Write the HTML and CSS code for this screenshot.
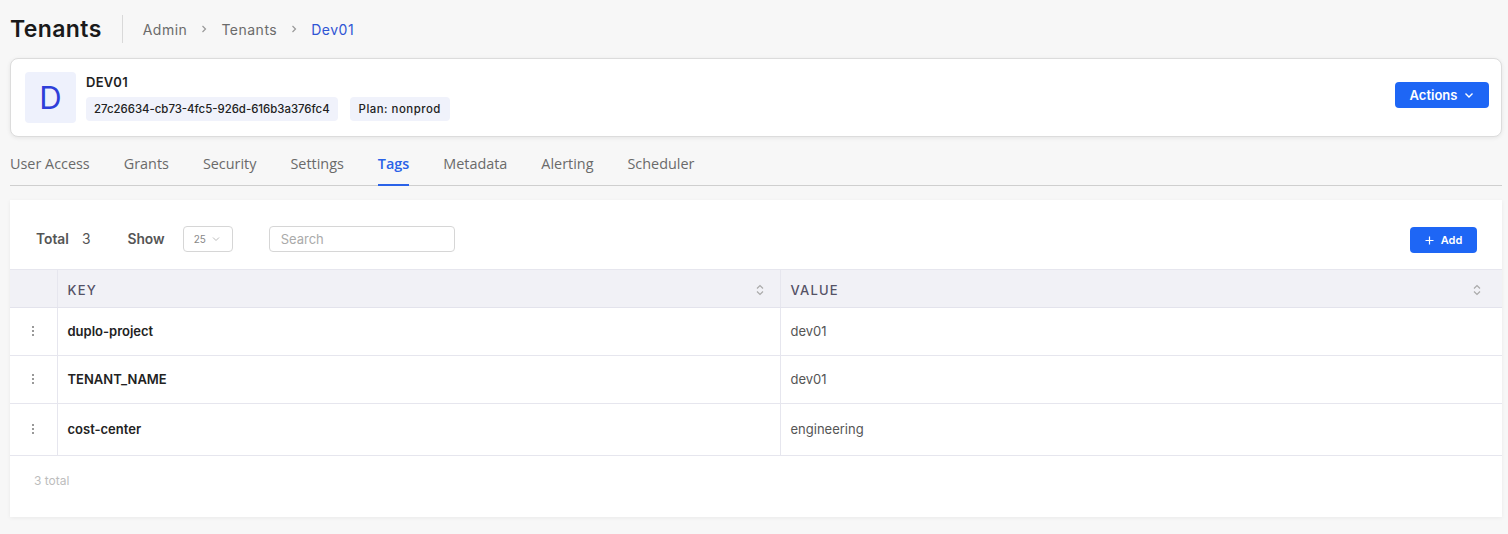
FILE: index.html
```html
<!DOCTYPE html>
<html>
<head>
<meta charset="utf-8">
<link rel="stylesheet" href="styles.css">
</head>
<body>
<div class="page">
  <header class="topbar">
    <h1 class="title">Tenants</h1>
    <nav class="crumbs">
      <span class="crumb">Admin</span>
      <svg class="sep" width="8" height="10" viewBox="0 0 8 10"><path d="M2.5 2l3 3-3 3" fill="none" stroke="#999" stroke-width="1.2"/></svg>
      <span class="crumb">Tenants</span>
      <svg class="sep" width="8" height="10" viewBox="0 0 8 10"><path d="M2.5 2l3 3-3 3" fill="none" stroke="#999" stroke-width="1.2"/></svg>
      <span class="crumb active">Dev01</span>
    </nav>
  </header>

  <section class="card">
    <div class="avatar">D</div>
    <div class="info">
      <div class="name">DEV01</div>
      <div class="chips">
        <span class="chip">27c26634-cb73-4fc5-926d-616b3a376fc4</span>
        <span class="chip plan">Plan: nonprod</span>
      </div>
    </div>
    <button class="actions">Actions
      <svg width="10" height="10" viewBox="0 0 10 10"><path d="M1.5 3.5l3.5 3.5 3.5-3.5" fill="none" stroke="#fff" stroke-width="1.4"/></svg>
    </button>
  </section>

  <nav class="tabs">
    <span class="tab">User Access</span>
    <span class="tab">Grants</span>
    <span class="tab">Security</span>
    <span class="tab">Settings</span>
    <span class="tab active">Tags</span>
    <span class="tab">Metadata</span>
    <span class="tab">Alerting</span>
    <span class="tab">Scheduler</span>
  </nav>

  <section class="panel">
    <div class="toolbar">
      <span class="lbl">Total</span><span class="num">3</span>
      <span class="lbl show">Show</span>
      <div class="select">25
        <svg width="8" height="6" viewBox="0 0 8 6"><path d="M1 1.5l3 3 3-3" fill="none" stroke="#bbb" stroke-width="1"/></svg>
      </div>
      <div class="search">Search</div>
      <button class="add">
        <svg width="9" height="9" viewBox="0 0 9 9"><path d="M4.5 0.5v8M0.5 4.5h8" stroke="#fff" stroke-width="1.2"/></svg>
        Add
      </button>
    </div>
    <table class="grid">
      <thead>
        <tr>
          <th class="c0"></th>
          <th class="c1"><div class="hd">KEY<svg width="8" height="12" viewBox="0 0 8 12"><path d="M1 4.5l3-3 3 3M1 7.5l3 3 3-3" fill="none" stroke="#aaa" stroke-width="1.2"/></svg></div></th>
          <th class="c2"><div class="hd">VALUE<svg width="8" height="12" viewBox="0 0 8 12"><path d="M1 4.5l3-3 3 3M1 7.5l3 3 3-3" fill="none" stroke="#aaa" stroke-width="1.2"/></svg></div></th>
        </tr>
      </thead>
      <tbody>
        <tr>
          <td class="c0"><span class="dots"><i></i><i></i><i></i></span></td>
          <td class="c1 key">duplo-project</td>
          <td class="c2 val">dev01</td>
        </tr>
        <tr>
          <td class="c0"><span class="dots"><i></i><i></i><i></i></span></td>
          <td class="c1 key">TENANT_NAME</td>
          <td class="c2 val">dev01</td>
        </tr>
        <tr class="last">
          <td class="c0"><span class="dots"><i></i><i></i><i></i></span></td>
          <td class="c1 key">cost-center</td>
          <td class="c2 val">engineering</td>
        </tr>
      </tbody>
    </table>
    <div class="footer">3 total</div>
  </section>
</div>
</body>
</html>
```

FILE: styles.css
```css
* { box-sizing: border-box; }
html, body { margin: 0; padding: 0; }
body {
  background: #f7f7f7;
  font-family: "Inter", "Liberation Sans", sans-serif;
  color: #222;
  width: 1508px;
  height: 534px;
  overflow: hidden;
}
.page { padding: 0 6px 0 10px; }

.topbar {
  height: 58px;
  display: flex;
  align-items: center;
}
.title {
  margin: 0;
  font-size: 23px;
  font-weight: 600;
  color: #1a1a1a;
  padding-right: 20px;
  border-right: 1px solid #d9d9d9;
  line-height: 28px;
  letter-spacing: 0.4px;
}
.crumbs {
  display: flex;
  align-items: center;
  padding-left: 20px;
  font-size: 14px;
  letter-spacing: 0.5px;
  color: #6b6b6b;
  gap: 13px;
}
.crumb.active { color: #2f55d4; }

.card {
  height: 79px;
  background: #fff;
  border: 1px solid #dcdcdc;
  border-radius: 8px;
  box-shadow: 0 1px 4px rgba(0,0,0,0.08);
  display: flex;
  align-items: center;
  padding: 0 13px 0 14px;
}
.avatar {
  width: 51px;
  height: 51px;
  border-radius: 4px;
  background: #eef1fc;
  color: #2e3fd9;
  font-size: 31px;
  display: flex;
  align-items: center;
  justify-content: center;
  font-weight: 400;
}
.info { margin-left: 10px; flex: 1; }
.name { font-size: 13px; font-weight: 600; color: #1f1f1f; margin-bottom: 7px; margin-top: -1px; letter-spacing: 0.3px; }
.chips { display: flex; gap: 12px; }
.chip {
  background: #f0f2fb;
  border-radius: 4px;
  font-size: 11.4px;
  font-weight: 500;
  color: #222;
  padding: 0 8px;
  height: 24px;
  line-height: 24px;
}
.chip.plan { letter-spacing: 0.5px; padding: 0 9px; }
.actions {
  background: #1e66f5;
  color: #fff;
  border: none;
  border-radius: 4px;
  height: 26px;
  width: 94px;
  font-family: inherit;
  font-size: 13px;
  font-weight: 600;
  display: flex;
  align-items: center;
  justify-content: center;
  gap: 7px;
  margin-top: -5px;
  margin-right: -1px;
}

.tabs {
  display: flex;
  height: 49px;
  border-bottom: 1px solid #cfcfcf;
  font-family: "Open Sans", "Noto Sans", sans-serif;
  font-size: 14.4px;
  color: #6a6a6a;
  gap: 34px;
}
.tab {
  display: flex;
  align-items: center;
  padding-top: 6px;
  border-bottom: 2px solid transparent;
  margin-bottom: -1px;
}
.tab.active { color: #2a62e8; font-weight: 600; border-bottom-color: #2a62e8; }

.panel {
  margin-top: 14px;
  background: #fff;
  height: 317px;
  box-shadow: 0 1px 4px rgba(0,0,0,0.06);
}
.toolbar {
  height: 70px;
  display: flex;
  align-items: center;
  padding: 8px 25px 0 26px;
  font-size: 13.8px;
  border-bottom: 1px solid #e6e6ee;
}
.lbl { font-weight: 600; color: #555; }
.num { margin-left: 13px; color: #555; }
.show { margin-left: 37px; }
.select {
  margin-left: 18px;
  width: 50px;
  height: 26px;
  border: 1px solid #d6d6d6;
  border-radius: 4px;
  font-size: 10px;
  color: #888;
  display: flex;
  align-items: center;
  padding-left: 10px;
  gap: 6px;
}
.search {
  margin-left: 36px;
  width: 186px;
  height: 26px;
  border: 1px solid #d6d6d6;
  border-radius: 4px;
  font-size: 13px;
  color: #aaa;
  display: flex;
  align-items: center;
  padding-left: 11px;
}
.add {
  margin-left: auto;
  margin-top: 3px;
  width: 67px;
  height: 26px;
  background: #1e66f5;
  color: #fff;
  border: none;
  border-radius: 4px;
  font-family: inherit;
  font-size: 11px;
  font-weight: 600;
  display: flex;
  align-items: center;
  justify-content: center;
  gap: 7px;
}

.grid {
  width: 100%;
  border-collapse: collapse;
  font-size: 13px;
}
.grid th {
  background: #f1f1f6;
  height: 37px;
  padding-top: 4px;
  text-align: left;
  font-weight: 500;
  font-size: 13px;
  letter-spacing: 1.2px;
  color: #555266;
  border-bottom: 1px solid #e3e3ec;
}
.c0 { width: 47px; border-right: 1px solid #e6e6ee; }
.grid .c1 { width: 723px; border-right: 1px solid #e6e6ee; padding-left: 10px; padding-right: 16px; }
.grid .c2 { padding-left: 10px; padding-right: 21px; }
.hd { display: flex; justify-content: space-between; align-items: center; }
.grid td { height: 48px; border-bottom: 1px solid #e6e6ee; }
.grid tr.last td { height: 52px; }
.key { font-weight: 600; color: #222; }
.val { color: #555; }
.dots { display: flex; flex-direction: column; align-items: center; gap: 2px; }
.dots i { width: 2px; height: 2px; background: #777; border-radius: 50%; display: block; }

.footer {
  padding: 17px 0 0 24px;
  font-size: 12px;
  color: #bdbdbd;
}
```
